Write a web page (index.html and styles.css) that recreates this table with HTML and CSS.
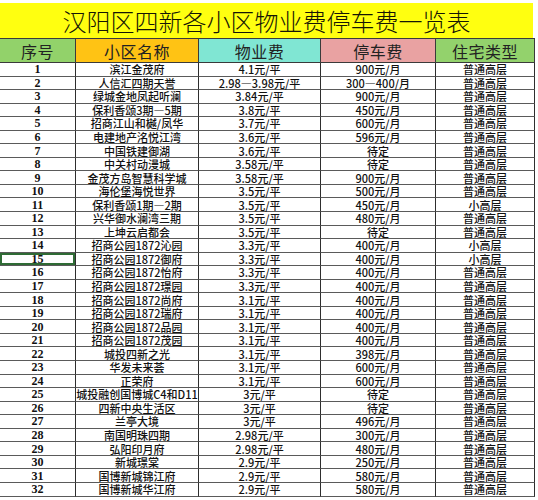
FILE: index.html
```html
<!DOCTYPE html>
<html lang="zh-CN">
<head>
<meta charset="utf-8">
<title>汉阳区四新各小区物业费停车费一览表</title>
<link rel="stylesheet" href="styles.css">
</head>
<body>
<div class="page">
  <div class="title">汉阳区四新各小区物业费停车费一览表</div>
  <div class="sheet">
    <div class="hd h1">序号</div><div class="hd h2">小区名称</div><div class="hd h3">物业费</div><div class="hd h4">停车费</div><div class="hd h5">住宅类型</div>

    <div class="c no">1</div><div class="c">滨江金茂府</div><div class="c">4.1元/平</div><div class="c">900元/月</div><div class="c">普通高层</div>
    <div class="c no">2</div><div class="c">人信汇四期天誉</div><div class="c">2.98—3.98元/平</div><div class="c">300—400/月</div><div class="c">普通高层</div>
    <div class="c no">3</div><div class="c">绿城金地凤起听澜</div><div class="c">3.84元/平</div><div class="c">900元/月</div><div class="c">普通高层</div>
    <div class="c no">4</div><div class="c">保利香颂3期—5期</div><div class="c">3.8元/平</div><div class="c">450元/月</div><div class="c">普通高层</div>
    <div class="c no">5</div><div class="c">招商江山和樾/凤华</div><div class="c">3.7元/平</div><div class="c">600元/月</div><div class="c">普通高层</div>
    <div class="c no">6</div><div class="c">电建地产洺悦江湾</div><div class="c">3.6元/平</div><div class="c">596元/月</div><div class="c">普通高层</div>
    <div class="c no">7</div><div class="c">中国铁建御湖</div><div class="c">3.6元/平</div><div class="c">待定</div><div class="c">普通高层</div>
    <div class="c no">8</div><div class="c">中关村动漫城</div><div class="c">3.58元/平</div><div class="c">待定</div><div class="c">普通高层</div>
    <div class="c no">9</div><div class="c">金茂方岛智慧科学城</div><div class="c">3.58元/平</div><div class="c">900元/月</div><div class="c">普通高层</div>
    <div class="c no">10</div><div class="c">海伦堡海悦世界</div><div class="c">3.5元/平</div><div class="c">500元/月</div><div class="c">普通高层</div>
    <div class="c no">11</div><div class="c">保利香颂1期—2期</div><div class="c">3.5元/平</div><div class="c">450元/月</div><div class="c">小高层</div>
    <div class="c no">12</div><div class="c">兴华御水澜湾三期</div><div class="c">3.5元/平</div><div class="c">480元/月</div><div class="c">普通高层</div>
    <div class="c no">13</div><div class="c">上坤云启都会</div><div class="c">3.5元/平</div><div class="c">待定</div><div class="c">普通高层</div>
    <div class="c no">14</div><div class="c">招商公园1872沁园</div><div class="c">3.3元/平</div><div class="c">400元/月</div><div class="c">小高层</div>
    <div class="c no sel">15</div><div class="c">招商公园1872御府</div><div class="c">3.3元/平</div><div class="c">400元/月</div><div class="c">小高层</div>
    <div class="c no">16</div><div class="c">招商公园1872怡府</div><div class="c">3.3元/平</div><div class="c">400元/月</div><div class="c">普通高层</div>
    <div class="c no">17</div><div class="c">招商公园1872璟园</div><div class="c">3.3元/平</div><div class="c">400元/月</div><div class="c">普通高层</div>
    <div class="c no">18</div><div class="c">招商公园1872尚府</div><div class="c">3.1元/平</div><div class="c">400元/月</div><div class="c">普通高层</div>
    <div class="c no">19</div><div class="c">招商公园1872瑞府</div><div class="c">3.1元/平</div><div class="c">400元/月</div><div class="c">普通高层</div>
    <div class="c no">20</div><div class="c">招商公园1872品园</div><div class="c">3.1元/平</div><div class="c">400元/月</div><div class="c">普通高层</div>
    <div class="c no">21</div><div class="c">招商公园1872茂园</div><div class="c">3.1元/平</div><div class="c">400元/月</div><div class="c">普通高层</div>
    <div class="c no">22</div><div class="c">城投四新之光</div><div class="c">3.1元/平</div><div class="c">398元/月</div><div class="c">普通高层</div>
    <div class="c no">23</div><div class="c">华发未来荟</div><div class="c">3.1元/平</div><div class="c">600元/月</div><div class="c">普通高层</div>
    <div class="c no">24</div><div class="c">正荣府</div><div class="c">3.1元/平</div><div class="c">600元/月</div><div class="c">普通高层</div>
    <div class="c no">25</div><div class="c">城投融创国博城C4和D11</div><div class="c">3元/平</div><div class="c">待定</div><div class="c">普通高层</div>
    <div class="c no">26</div><div class="c">四新中央生活区</div><div class="c">3元/平</div><div class="c">待定</div><div class="c">普通高层</div>
    <div class="c no">27</div><div class="c">兰亭大境</div><div class="c">3元/平</div><div class="c">496元/月</div><div class="c">普通高层</div>
    <div class="c no">28</div><div class="c">南国明珠四期</div><div class="c">2.98元/平</div><div class="c">300元/月</div><div class="c">普通高层</div>
    <div class="c no">29</div><div class="c">弘阳印月府</div><div class="c">2.98元/平</div><div class="c">480元/月</div><div class="c">普通高层</div>
    <div class="c no">30</div><div class="c">新城璟棠</div><div class="c">2.9元/平</div><div class="c">250元/月</div><div class="c">普通高层</div>
    <div class="c no">31</div><div class="c">国博新城锦江府</div><div class="c">2.9元/平</div><div class="c">580元/月</div><div class="c">普通高层</div>
    <div class="c no">32</div><div class="c">国博新城华江府</div><div class="c">2.9元/平</div><div class="c">580元/月</div><div class="c">普通高层</div>
  </div>
</div>
</body>
</html>
```

FILE: styles.css
```css
html, body {
  margin: 0;
  padding: 0;
  background: #ffffff;
}

.page {
  width: 535px;
  padding-top: 3px;
  font-family: "Noto Sans CJK SC", "Noto Sans", sans-serif;
  color: #111;
}

.title {
  height: 35px;
  width: 533px;
  background: #ffff10;
  display: flex;
  align-items: center;
  justify-content: center;
  font-size: 24px;
  line-height: 28px;
  font-weight: 300;
  color: #151505;
}

.sheet {
  display: grid;
  grid-template-columns: 76px 123px 122px 115px 99px;
  grid-template-rows: 24px;
  grid-auto-rows: 13.56px;
  border-top: 1px solid #3a3a3a;
}

.hd {
  box-sizing: border-box;
  display: flex;
  align-items: center;
  justify-content: center;
  font-size: 16px;
  line-height: 20px;
  font-weight: 400;
  color: #222;
  border-right: 1px solid #3a3a3a;
  border-bottom: 1px solid #3a3a3a;
  letter-spacing: 0.5px;
}

.h1 { background: #92d26a; }
.h2 { background: #ffc314; }
.h3 { background: #80e6d3; }
.h4 { background: #e9a2a2; }
.h5 { background: #93d26c; }

.c {
  box-sizing: border-box;
  display: flex;
  align-items: center;
  justify-content: center;
  font-size: 11px;
  line-height: 12px;
  font-weight: 500;
  white-space: nowrap;
  border-right: 1px solid #2e2e2e;
  border-bottom: 1px solid #5a5a5a;
}

.no {
  font-family: "Liberation Serif", "Noto Sans CJK SC", serif;
  font-weight: bold;
  font-size: 12px;
}

.sel {
  box-shadow: inset 0 0 0 2px #2f6b35;
}
```
